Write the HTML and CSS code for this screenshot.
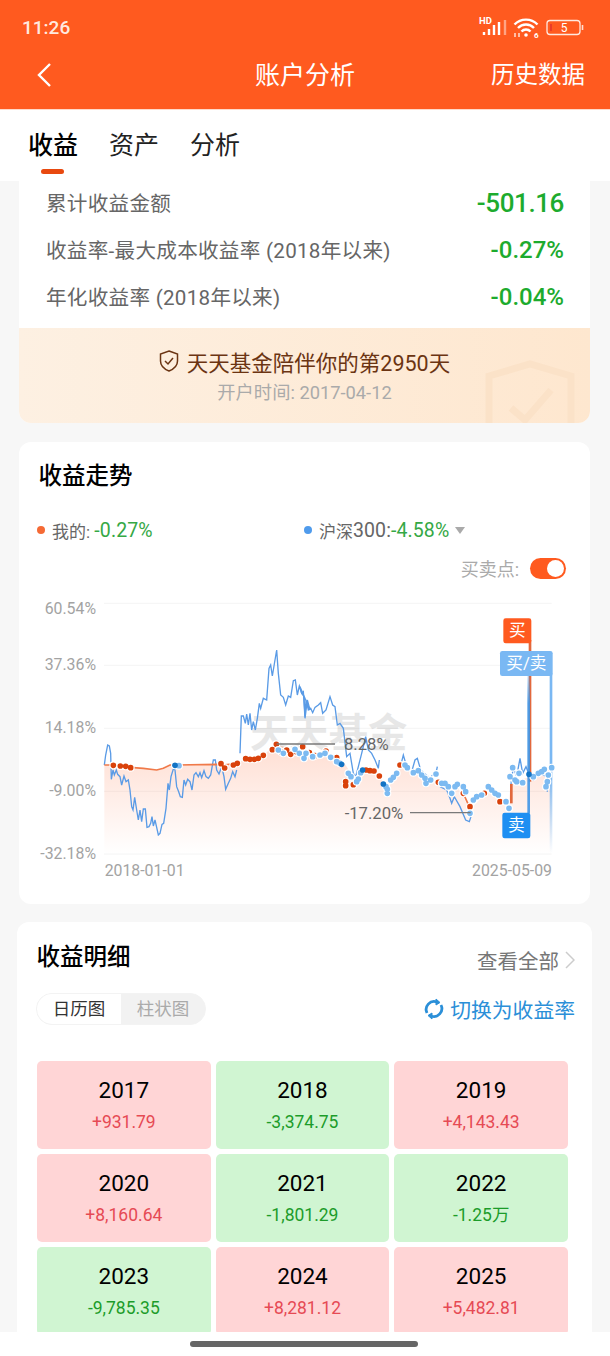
FILE: index.html
```html
<!DOCTYPE html>
<html lang="zh-CN">
<head>
    <meta charset="UTF-8">
    <meta name="viewport" content="width=device-width, initial-scale=1.0">
    <title>账户分析</title>
    <link rel="stylesheet" href="styles.css">
</head>
<body>
    <header>
        <div class="status-bar">
            <span class="time">11:26</span>
            <svg class="status-icons" width="106" height="24" viewBox="0 0 106 24">
                <text x="1" y="9" class="hd">HD</text>
                <path class="bars" d="M6 17v3M11 14v6M16 10v10M21 7v13"></path>
                <path class="bars faded" d="M27 5v15"></path>
                <path class="wifi" d="M36.500 9.500a16 16 0 0 1 23 0M40 13a11 11 0 0 1 16 0M43.500 16.500a6 6 0 0 1 9 0"></path>
                <circle cx="48" cy="20" r="1.800" fill="#fff"></circle>
                <text x="56" y="23" class="hd small">6</text>
                <path class="wifi thin" d="M37 18v4M41 18v4"></path>
                <rect x="69" y="5.500" width="33" height="14" rx="3" class="batt"></rect>
                <path d="M73 9v7" stroke="#e5352b" stroke-width="1.600"></path>
                <path d="M104.500 10v5" stroke="#fff" stroke-width="1.600" opacity=".8"></path>
                <text x="86" y="17" class="batt-num">5</text>
            </svg>
        </div>
        <nav class="nav-bar">
            <svg class="back" width="16" height="26" viewBox="0 0 16 26" fill="none" stroke="currentColor" stroke-width="2.400">
                <polyline points="14 2 3 13 14 24"></polyline>
            </svg>
            <h1>账户分析</h1>
            <a class="nav-link">历史数据</a>
        </nav>
    </header>

    <div class="tabs">
        <div class="tab active">收益</div>
        <div class="tab">资产</div>
        <div class="tab">分析</div>
    </div>

    <main>
        <section class="card summary">
            <div class="stats">
                <div class="stat-row"><span>累计收益金额</span><b class="big">-501.16</b></div>
                <div class="stat-row"><span>收益率-最大成本收益率 (2018年以来)</span><b>-0.27%</b></div>
                <div class="stat-row"><span>年化收益率 (2018年以来)</span><b>-0.04%</b></div>
            </div>
            <div class="banner">
                <svg class="banner-mark" width="90" height="63" viewBox="0 0 90 63" fill="none" stroke="#fbe2c8" stroke-width="7">
                    <path d="M4 63V16L45 4l41 12v47"></path>
                    <polyline points="26 48 40 60 66 30"></polyline>
                </svg>
                <div class="banner-title">
                    <svg width="20" height="22" viewBox="0 0 20 22" fill="none" stroke="#6b3412" stroke-width="1.500">
                        <path d="M10 1l8.500 3v7c0 5-3.500 8-8.500 10-5-2-8.500-5-8.500-10V4z"></path>
                        <polyline points="6 11 9 14 14 8"></polyline>
                    </svg>
                    <span>天天基金陪伴你的第2950天</span>
                </div>
                <div class="banner-sub">开户时间: 2017-04-12</div>
            </div>
        </section>

        <section class="card trend">
            <h2 class="trend-title">收益走势</h2>
            <div class="legend">
                <div class="legend-item"><i class="dot mine"></i>我的: <em>-0.27%</em></div>
                <div class="legend-item"><i class="dot index"></i>沪深<span class="num">300:</span> <em>-4.58%</em><i class="caret"></i></div>
            </div>
            <div class="points-toggle">
                <span>买卖点:</span>
                <span class="switch"><i></i></span>
            </div>
            <!-- chart units are 3x page px, origin at page (20,590) -->
            <svg class="chart" width="570" height="300" viewBox="0 0 1710 900">
                <defs>
                    <linearGradient id="area" x1="0" y1="0" x2="0" y2="1">
                        <stop offset="0" stop-color="#ff5a1f" stop-opacity=".2"></stop>
                        <stop offset="1" stop-color="#ff5a1f" stop-opacity="0"></stop>
                    </linearGradient>
                    <linearGradient id="fadeline" gradientUnits="userSpaceOnUse" x1="0" y1="250" x2="0" y2="790">
                        <stop offset="0" stop-color="#7ab8f3"></stop>
                        <stop offset=".55" stop-color="#7ab8f3"></stop>
                        <stop offset="1" stop-color="#7ab8f3" stop-opacity="0"></stop>
                    </linearGradient>
                    <linearGradient id="sellline" gradientUnits="userSpaceOnUse" x1="0" y1="258" x2="0" y2="340">
                        <stop offset="0" stop-color="#3f95e6" stop-opacity=".25"></stop>
                        <stop offset="1" stop-color="#3f95e6" stop-opacity=".9"></stop>
                    </linearGradient>
                </defs>

                <g class="grid">
                    <path d="M252 40H1595M252 226H1595M252 415H1595M252 604H1595M252 792H1595"></path>
                </g>
                <g class="axis">
                    <text x="228" y="73">60.54%</text>
                    <text x="228" y="241">37.36%</text>
                    <text x="228" y="428">14.18%</text>
                    <text x="228" y="617">-9.00%</text>
                    <text x="228" y="806">-32.18%</text>
                </g>
                <text class="date" x="254" y="857">2018-01-01</text>
                <text class="date end" x="1596" y="857">2025-05-09</text>

                <text class="watermark" x="690" y="470">天天基金</text>

                <path fill="url(#area)" d="M253 525L280 525 330 532 370 535 410 540 430 535 450 525 470 525 590 523 610 525 650 520 680 505 730 495 770 462 830 485 848 470 870 490 900 505 930 495 950 505 970 515 990 545 1000 585 1015 578 1040 540 1080 560 1102 600 1140 530 1190 545 1220 575 1260 575 1310 585 1350 660 1390 615 1405 590 1465 655 1472 580 1530 560 1595 535V792H253Z"></path>

                <polyline class="line-index" points="253,525 257,495 263,465 268,468 272,490 274,568 279,540 283,555 289,540 293,553 300,560 305,585 312,558 318,575 325,570 330,600 335,650 339,660 344,622 350,660 355,690 360,660 365,695 370,657 376,657 381,712 387,710 392,700 396,680 400,708 405,690 410,712 415,735 420,730 426,703 431,700 438,655 444,580 448,600 453,560 460,537 465,540 470,590 476,605 481,620 487,622 492,570 497,585 503,568 510,575 516,600 522,555 528,548 535,560 540,548 545,563 552,542 558,560 565,565 572,555 580,510 586,510 590,540 597,552 605,530 612,560 617,598 625,580 632,565 638,545 645,560 650,540"></polyline>
                <polyline class="line-index" points="660,490 664,378 670,378 676,400 680,372 685,405 690,370 695,420 700,395 706,420 712,385 718,340 722,355 730,325 740,330 747,235 752,225 757,258 763,222 770,180 775,250 782,315 790,322 797,345 805,318 812,322 820,272 826,270 832,315 838,288 845,310 850,305 855,385 862,330 870,360"></polyline>
                <g transform="translate(840 0)">
                    <polyline class="line-index" points="30,360 0,290 5,310 12,320 15,380 18,330 25,360 32,355 38,368 45,352 55,345 62,338 68,370 78,360 90,320 98,345 105,350 112,405 120,400 130,415 140,500 150,490 160,550 167,560 175,530 185,490 197,440 205,480 215,490 225,510 235,535 238,510"></polyline>
                    <polyline class="line-index" points="305,515 310,495 320,530 335,545 345,510 352,505 362,540 390,565 410,540 412,530"></polyline>
                    <polyline class="line-index" points="420,590 440,600 450,625 455,640 463,620 480,650 497,690 508,695 516,670"></polyline>
                    <polyline class="line-index" points="632,590 640,530 650,560 660,505 668,550 678,530 690,560 700,570 720,550 740,560 742,605"></polyline>
                </g>
                <polyline class="line-mine" points="253,525 280,525 330,532 370,535 410,540 430,535 450,525 470,525 590,523 610,525 650,520"></polyline>
                <polyline class="line-mine" transform="translate(840 0)" points="490,610 510,655 516,650"></polyline>
                <path class="line-mine wide" transform="translate(840 0)" d="M634 640V582"></path>

                <!-- buy / sell markers -->
                <path class="marker-line buy" transform="translate(840 0)" d="M690 150V575"></path>
                <path class="marker-line sell" transform="translate(840 0)" d="M686 258V670"></path>
                <path class="marker-line both" transform="translate(840 0)" d="M753 250V790"></path>

                <!-- round linecaps on zero length segments draw the dots -->
                <g class="dots">
                    <path class="halo" d="M280 526h0M301 528h0M317 529h0M332 533h0M465 526h0M477 527h0M603 521h0M614 534h0M640 525h0M652 520h0M677 506h0M690 508h0M703 508h0M715 505h0M730 496h0M757 479h0M769 463h0"></path>
                    <path class="red" d="M280 526h0M301 528h0M317 529h0M332 533h0M603 521h0M614 534h0M640 525h0M652 520h0M677 506h0M690 508h0M703 508h0M715 505h0M730 496h0M757 479h0M769 463h0"></path>
                    <path class="sky" d="M477 527h0"></path>
                    <path class="navy" d="M465 526h0"></path>

                    <path class="halo" d="M783 485h0M800 480h0M812 493h0M830 486h0M850 472h0M866 488h0"></path>
                    <path class="red" d="M783 485h0M800 480h0M812 493h0M830 486h0M850 472h0M866 488h0"></path>
                    <path class="halo" d="M775 480h0M790 490h0M825 478h0M838 490h0M853 500h0"></path>
                    <path class="sky" d="M775 480h0M790 490h0M825 478h0M838 490h0M853 500h0"></path>

                    <g transform="translate(840 0)">
                        <path class="halo" d="M8 470h0M28 488h0M45 497h0M78 483h0M110 503h0M137 575h0M137 587h0M160 584h0M198 540h0M210 542h0M222 543h0M238 558h0M300 525h0M415 577h0M490 610h0M510 650h0M553 610h0M600 635h0"></path>
                        <path class="red" d="M8 470h0M28 488h0M45 497h0M78 483h0M110 503h0M137 575h0M137 587h0M160 584h0M198 540h0M210 542h0M222 543h0M238 558h0M300 525h0M415 577h0M490 610h0M510 650h0M553 610h0M600 635h0"></path>
                        <path class="halo" d="M12 505h0M18 490h0M38 500h0M60 495h0M75 490h0M92 502h0M110 515h0M120 520h0M145 550h0M153 560h0M170 575h0M175 567h0M182 548h0M258 590h0M262 598h0M262 610h0M272 570h0M280 562h0M290 550h0M315 525h0M322 533h0M340 548h0M355 542h0M365 555h0M375 565h0M378 580h0M392 570h0M408 552h0M425 580h0M435 580h0M445 590h0M455 610h0M465 590h0M472 583h0M490 590h0M497 605h0M510 670h0M520 630h0M530 620h0M545 615h0M565 590h0M575 600h0M585 610h0M595 615h0M618 635h0M627 655h0M630 560h0M638 533h0M645 570h0M650 575h0M657 550h0M668 578h0M700 560h0M715 550h0M725 545h0M733 538h0M738 590h0M742 575h0M745 555h0M755 533h0"></path>
                        <path class="sky" d="M12 505h0M18 490h0M38 500h0M60 495h0M75 490h0M92 502h0M110 515h0M120 520h0M145 550h0M153 560h0M170 575h0M175 567h0M182 548h0M258 590h0M262 598h0M262 610h0M272 570h0M280 562h0M290 550h0M315 525h0M322 533h0M340 548h0M355 542h0M365 555h0M375 565h0M378 580h0M392 570h0M408 552h0M425 580h0M435 580h0M445 590h0M455 610h0M465 590h0M472 583h0M490 590h0M497 605h0M510 670h0M520 630h0M530 620h0M545 615h0M565 590h0M575 600h0M585 610h0M595 615h0M618 635h0M627 655h0M630 560h0M638 533h0M645 570h0M650 575h0M657 550h0M668 578h0M700 560h0M715 550h0M725 545h0M733 538h0M738 590h0M742 575h0M745 555h0M755 533h0"></path>
                        <path class="navy" d="M125 523h0M188 540h0M250 582h0M687 553h0"></path>
                    </g>
                </g>

                <path class="callout-line" d="M770 462H945M1170 668H1352"></path>
                <text class="callout" x="972" y="481">8.28%</text>
                <text class="callout" x="974" y="687">-17.20%</text>

                <g transform="translate(840 0)">
                    <rect class="tag-buy" x="610" y="85" width="84" height="75" rx="7"></rect>
                    <text class="tag-text" x="652" y="138">买</text>
                    <rect class="tag-both" x="600" y="183" width="158" height="75" rx="7"></rect>
                    <text class="tag-text" x="679" y="238">买/卖</text>
                    <rect class="tag-sell" x="607" y="668" width="84" height="77" rx="7"></rect>
                    <text class="tag-text" x="649" y="723">卖</text>
                </g>
            </svg>
        </section>

        <section class="card detail">
            <div class="detail-head">
                <h2>收益明细</h2>
                <a class="view-all">查看全部
                    <svg width="10" height="18" viewBox="0 0 10 18" fill="none" stroke="#ccc" stroke-width="1.500"><polyline points="1 1 9 9 1 17"></polyline></svg>
                </a>
            </div>
            <div class="detail-tools">
                <div class="segment">
                    <span class="seg on">日历图</span>
                    <span class="seg">柱状图</span>
                </div>
                <a class="switch-link">
                    <svg width="22" height="22" viewBox="0 0 22 22" fill="none" stroke="#2b8fd8" stroke-width="2.800">
                        <path d="M4 15a8 8 0 0 1 10-11"></path>
                        <path d="M18 7a8 8 0 0 1-10 11"></path>
                        <path d="M13 1l4 3.500-4 2.500zM9 21l-4-3.500 4-2.500z" fill="#2b8fd8" stroke-width="1"></path>
                    </svg>
                    切换为收益率
                </a>
            </div>
            <div class="cal-grid">
                <div class="cell up"><div class="year">2017</div><div class="amount">+931.79</div></div>
                <div class="cell down"><div class="year">2018</div><div class="amount">-3,374.75</div></div>
                <div class="cell up"><div class="year">2019</div><div class="amount">+4,143.43</div></div>
                <div class="cell up"><div class="year">2020</div><div class="amount">+8,160.64</div></div>
                <div class="cell down"><div class="year">2021</div><div class="amount">-1,801.29</div></div>
                <div class="cell down"><div class="year">2022</div><div class="amount">-1.25万</div></div>
                <div class="cell down"><div class="year">2023</div><div class="amount">-9,785.35</div></div>
                <div class="cell up"><div class="year">2024</div><div class="amount">+8,281.12</div></div>
                <div class="cell up"><div class="year">2025</div><div class="amount">+5,482.81</div></div>
            </div>
        </section>
    </main>

    <div class="home-bar"><span></span></div>
</body>
</html>
```

FILE: styles.css
```css
:root {
    --orange: #ff5a1f;
    --green: #1dab2e;
    --bg: #f7f7f7;
}
* {
    box-sizing: border-box;
}
body {
    margin: 0;
    height: 100vh;
    display: flex;
    flex-direction: column;
    overflow: hidden;
    background: var(--bg);
    font-family: Roboto, "Noto Sans CJK SC", sans-serif;
    color: #333;
}
h1, h2 {
    margin: 0;
}
header {
    height: 110px;
    flex: none;
    background: var(--orange);
    color: #fff;
    border-bottom: 1px solid #ffd9c9;
}
.status-bar {
    height: 50px;
    padding: 4px 26px 0 22px;
    display: flex;
    justify-content: space-between;
    align-items: center;
}
.time {
    font-size: 19px;
    font-weight: 500;
    color: #ffe9df;
}
.hd {
    font-size: 9.500px;
    font-weight: 700;
    fill: #fff;
}
.hd.small {
    font-size: 8px;
}
.bars {
    stroke: #fff;
    stroke-width: 2.400;
    fill: none;
}
.bars.faded {
    opacity: .45;
}
.wifi {
    stroke: #fff;
    stroke-width: 2.400;
    fill: none;
}
.wifi.thin {
    stroke-width: 1.200;
}
.batt {
    fill: none;
    stroke: #ffe9df;
    stroke-width: 1.300;
}
.batt-num {
    font-size: 12px;
    fill: #fff;
    text-anchor: middle;
}
.nav-bar {
    height: 50px;
    padding: 0 25px;
    display: grid;
    grid-template-columns: 1fr auto 1fr;
    align-items: center;
}
.back {
    margin-left: 11px;
}
.nav-bar h1 {
    margin-top: -4px;
    font-size: 25px;
    font-weight: 400;
}
.nav-link {
    margin-top: -4px;
    font-size: 23.500px;
    text-align: right;
}

.tabs {
    height: 71px;
    flex: none;
    background: #fff;
    padding-left: 28px;
    display: flex;
    gap: 31px;
    font-size: 25px;
    color: #222;
}
.tab {
    position: relative;
    line-height: 72px;
}
.tab.active {
    color: #000;
    font-weight: 500;
}
.tab.active::after {
    content: "";
    position: absolute;
    left: 13px;
    top: 59px;
    width: 23px;
    height: 5px;
    border-radius: 3px;
    background: #e8490f;
}

main {
    flex: 1;
    min-height: 0;
    overflow: hidden;
}
.card {
    background: #fff;
    margin: 0 20px 19px 19px;
    border-radius: 12px;
}
.summary {
    border-radius: 0 0 12px 12px;
}
.stats {
    display: grid;
    grid-auto-rows: 44px;
    gap: 3px;
    padding: 0 26px 9px 27px;
}
.stat-row {
    display: flex;
    justify-content: space-between;
    align-items: center;
    font-size: 20.600px;
    letter-spacing: .27px;
    color: #666;
}
.stat-row span {
    margin-top: -2px;
}
.stat-row b {
    font-size: 24px;
    font-weight: 500;
    letter-spacing: 0;
    color: var(--green);
}
.stat-row b.big {
    font-size: 26px;
    letter-spacing: -.4px;
}
.banner {
    position: relative;
    height: 95px;
    padding-top: 18px;
    overflow: hidden;
    background: linear-gradient(90deg, #fdf0e2, #fee7cf);
    border-radius: 0 0 12px 12px;
    text-align: center;
}
.banner-mark {
    position: absolute;
    right: 15px;
    bottom: 0;
}
.banner-title {
    position: relative;
    height: 30px;
    display: flex;
    justify-content: center;
    align-items: center;
    gap: 8px;
    font-size: 21.500px;
    color: #6b3412;
}
.banner-sub {
    position: relative;
    margin-top: 3px;
    line-height: 28px;
    font-size: 18.300px;
    color: #aaa;
}

.trend {
    height: 462px;
    margin-bottom: 18px;
}
.trend-title {
    height: 68px;
    line-height: 69px;
    padding-left: 19.500px;
    font-size: 23.500px;
    font-weight: 500;
    color: #000;
}
.legend {
    height: 40px;
    padding-left: 18px;
    display: grid;
    grid-template-columns: 267px auto;
    font-size: 17px;
    color: #666;
}
.legend-item {
    display: flex;
    align-items: center;
    white-space: pre;
}
.legend-item em,
.legend-item .num {
    font-style: normal;
    font-size: 19.500px;
    letter-spacing: .1px;
}
.legend-item em {
    color: #35a845;
}
.dot {
    width: 8px;
    height: 8px;
    margin-right: 7px;
    border-radius: 50%;
}
.dot.mine {
    background: #f56a35;
}
.dot.index {
    background: #4f9bec;
}
.caret {
    margin-left: 6px;
    border: 5px solid transparent;
    border-top: 7px solid #aaa;
    border-bottom: 0;
}
.points-toggle {
    height: 36px;
    margin-bottom: 4px;
    padding-right: 24px;
    display: flex;
    justify-content: flex-end;
    align-items: center;
    gap: 11px;
    font-size: 18px;
    color: #aaa;
}
.switch {
    width: 36px;
    height: 21px;
    padding: 2px;
    display: flex;
    justify-content: flex-end;
    border-radius: 11px;
    background: var(--orange);
}
.switch i {
    width: 17px;
    height: 17px;
    border-radius: 50%;
    background: #fff;
}

.chart {
    display: block;
    margin-left: 1px;
}
.grid path {
    stroke: #f4f4f4;
    stroke-width: 3;
    fill: none;
}
.axis text {
    font-size: 47.500px;
    fill: #a3a3a3;
    text-anchor: end;
}
.date {
    font-size: 47.500px;
    fill: #a3a3a3;
}
.date.end {
    text-anchor: end;
}
.watermark {
    font-size: 118px;
    font-weight: 700;
    fill: #000;
    opacity: .09;
    font-family: "Noto Sans CJK SC", sans-serif;
}
.line-index {
    fill: none;
    stroke: #5a9be6;
    stroke-width: 4;
}
.line-mine {
    fill: none;
    stroke: #f07a4a;
    stroke-width: 5;
}
.line-mine.wide {
    stroke: #e2683c;
    stroke-width: 8;
}
.marker-line {
    fill: none;
    stroke-width: 8;
}
.marker-line.buy {
    stroke: #e2683c;
}
.marker-line.sell {
    stroke: url(#sellline);
    stroke-width: 8;
}
.marker-line.both {
    stroke: url(#fadeline);
    stroke-width: 8;
}
.dots path {
    fill: none;
    stroke-linecap: round;
}
.dots .halo {
    stroke: #fff;
    stroke-width: 24;
}
.dots .red {
    stroke: #d9420b;
    stroke-width: 17;
}
.dots .sky {
    stroke: #7cbaf1;
    stroke-width: 17;
}
.dots .navy {
    stroke: #1273c4;
    stroke-width: 17;
}
.callout-line {
    stroke: #7a7a7a;
    stroke-width: 4;
    fill: none;
}
.callout {
    font-size: 50px;
    fill: #666;
}
.tag-buy {
    fill: var(--orange);
}
.tag-both {
    fill: #7ab8f3;
}
.tag-sell {
    fill: #1e8ff2;
}
.tag-text {
    font-size: 50px;
    fill: #fff;
    text-anchor: middle;
}

.detail {
    height: 500px;
    margin: 0 18px 0 17px;
    border-radius: 12px 12px 0 0;
}
.detail-head {
    height: 71px;
    padding: 0 17px 5px 19.500px;
    display: flex;
    justify-content: space-between;
    align-items: center;
}
.detail-head h2 {
    font-size: 23.500px;
    font-weight: 500;
    color: #000;
}
.view-all {
    padding-top: 9px;
    display: flex;
    align-items: center;
    gap: 6px;
    font-size: 20.500px;
    color: #777;
}
.detail-tools {
    height: 32px;
    padding: 0 17px 0 19px;
    display: flex;
    justify-content: space-between;
    align-items: center;
}
.segment {
    width: 170px;
    height: 32px;
    display: flex;
    overflow: hidden;
    border-radius: 16px;
    border: 1px solid #f3f3f3;
    background: #f2f2f2;
    font-size: 17.500px;
    color: #aaa;
}
.seg {
    flex: 1;
    line-height: 30px;
    text-align: center;
}
.seg.on {
    flex: none;
    width: 84px;
    background: #fff;
    color: #333;
}
.switch-link {
    display: flex;
    align-items: center;
    gap: 5px;
    font-size: 20.800px;
    color: #2b8fd8;
}
.cal-grid {
    margin: 36px 24px 0 20px;
    display: grid;
    grid-template-columns: repeat(3, 1fr);
    grid-auto-rows: 88px;
    gap: 5px;
}
.cell {
    border-radius: 5px;
    text-align: center;
    padding-top: 13px;
}
.cell.up {
    background: #ffd5d6;
    color: #e64a54;
}
.cell.down {
    background: #d0f5d2;
    color: #1c9c2a;
}
.year {
    line-height: 32px;
    font-size: 22.500px;
    color: #000;
}
.amount {
    line-height: 32px;
    font-size: 17.500px;
}

.home-bar {
    height: 24px;
    flex: none;
    background: #fff;
    display: flex;
    justify-content: center;
    padding-top: 9px;
}
.home-bar span {
    width: 228px;
    height: 6px;
    margin-left: -2px;
    border-radius: 3px;
    background: #666;
}
```
